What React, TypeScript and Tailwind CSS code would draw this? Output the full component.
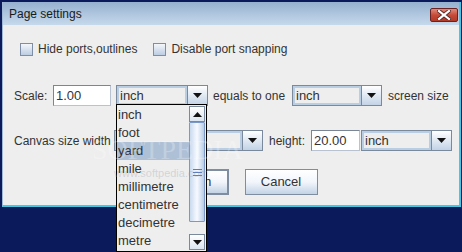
import React from 'react';

const UNITS = ['inch', 'foot', 'yard', 'mile', 'millimetre', 'centimetre', 'decimetre', 'metre'];

function Arrow({ up = false }: { up?: boolean }) {
  return (
    <svg width="9" height="5" viewBox="0 0 9 5" className={up ? 'rotate-180' : ''}>
      <path d="M0 0 H9 L4.5 5 Z" fill="#111" />
    </svg>
  );
}

function CheckBox({ label }: { label: string }) {
  return (
    <label className="flex items-center gap-[5px]">
      <span className="w-[13px] h-[13px] border border-[#7d8ea6] bg-gradient-to-b from-[#f4f7fb] to-[#bccde2]" />
      <span>{label}</span>
    </label>
  );
}

function TextField({ value, w }: { value: string; w: string }) {
  return (
    <div className={`${w} h-[21px] bg-white border border-[#7a8596] border-r-[#b8c2d0] border-b-[#b8c2d0] flex items-center pl-[2px] text-[13px]`}>
      {value}
    </div>
  );
}

function Combo({ value, w }: { value: string; w: string }) {
  return (
    <div className={`${w} h-[21px] flex border border-[#7a8a9c]`}>
      <div className="flex-1 border-2 border-[#b9cde3] bg-[#eeeeee] flex items-center pl-[1px] text-[13px]">{value}</div>
      <div className="w-[20px] border-l border-[#7a8a9c] bg-gradient-to-b from-[#ffffff] to-[#c2d3e6] flex items-center justify-center">
        <Arrow />
      </div>
    </div>
  );
}

function Button({ label, w, focused = false }: { label: string; w: string; focused?: boolean }) {
  return (
    <div className={`${w} h-[26px] flex items-center justify-center text-[13px] bg-gradient-to-b from-[#ffffff] via-[#f2f6fb] to-[#c3d3e6] ${focused ? 'border-2 border-[#7e8ea0]' : 'border border-[#7e8ea0]'}`}>
      {label}
    </div>
  );
}

export default function App() {
  return (
    <div className="w-[462px] h-[252px] bg-[#0b1a5a] relative overflow-hidden text-[12px] text-[#333]" style={{ fontFamily: '"Liberation Sans", Arial, sans-serif' }}>
      {/* window */}
      <div className="ml-[2px] mt-[2px] w-[459px] h-[205px] flex flex-col border-l border-[#9fb8d6] border-r-2 border-r-[#46c6e6] border-b-2 border-b-[#46c6e6]">
        <div className="h-[23px] bg-gradient-to-b from-[#95b1cf] to-[#c6d9ec] flex items-center pl-[6px] pr-[1px]">
          <span className="text-[12px] text-[#1a1a1a]">Page settings</span>
          <div className="ml-auto mt-[3px] w-[28px] h-[14px] rounded-[2px] border border-[#6b2222] bg-gradient-to-b from-[#e08a7a] via-[#c84a38] to-[#b03a28] flex items-center justify-center">
            <svg width="14" height="10" viewBox="0 0 14 10">
              <path d="M2 1 L12 9 M12 1 L2 9" stroke="#5a2a2a" strokeWidth="4" strokeLinecap="square" />
              <path d="M2 1 L12 9 M12 1 L2 9" stroke="#ffffff" strokeWidth="2.2" strokeLinecap="square" />
            </svg>
          </div>
        </div>

        <div className="flex-1 bg-[#eeeeee] flex flex-col">
          <div className="mt-[15px] ml-[17px] flex items-center gap-[16px]">
            <CheckBox label="Hide ports,outlines" />
            <CheckBox label="Disable port snapping" />
          </div>

          <div className="mt-[27px] ml-[11px] flex items-center">
            <span className="w-[39px]">Scale:</span>
            <TextField value="1.00" w="w-[58px]" />
            <div className="w-[5px]" />
            <Combo value="inch" w="w-[92px]" />
            <span className="ml-[5px] w-[79px]">equals to one</span>
            <Combo value="inch" w="w-[90px]" />
            <span className="ml-[6px]">screen size</span>
          </div>

          <div className="mt-[24px] ml-[11px] flex items-center">
            <span className="w-[100px]">Canvas size width</span>
            <Combo value="" w="w-[149px]" />
            <span className="ml-[6px] w-[42px]">height:</span>
            <TextField value="20.00" w="w-[49px]" />
            <div className="w-[1px]" />
            <Combo value="inch" w="w-[91px]" />
          </div>

          <div className="mt-[18px] flex items-center justify-center gap-[16px] pl-[4px]">
            <Button label="Confirm" w="w-[80px]" focused />
            <Button label="Cancel" w="w-[73px]" />
          </div>
        </div>
      </div>

      {/* dropdown popup */}
      <div className="absolute left-[116px] top-[104px] w-[91px] h-[148px] bg-[#eeeeee] border border-black flex text-[13px] text-[#333]">
        <div className="flex-1 flex flex-col pt-[1px]">
          {UNITS.map((u) => (
            <div key={u} className={`h-[18px] flex items-center pl-[1px] ${u === 'yard' ? 'bg-[#adc0d6]' : ''}`}>
              {u}
            </div>
          ))}
        </div>
        <div className="w-[17px] flex flex-col py-[1px] pr-[1px]">
          <div className="h-[16px] border border-[#7a8a9c] bg-gradient-to-b from-white to-[#dbe5f0] flex items-center justify-center">
            <Arrow up />
          </div>
          <div className="h-[100px] border border-[#7c98c6] rounded-[1px] bg-gradient-to-r from-[#c9daee] via-[#f7faff] to-[#b9cde6] flex items-center justify-center">
            <div className="flex flex-col gap-[2px]">
              <div className="w-[9px] h-[1px] bg-[#5b7cc0]" />
              <div className="w-[9px] h-[1px] bg-[#5b7cc0]" />
              <div className="w-[9px] h-[1px] bg-[#5b7cc0]" />
            </div>
          </div>
          <div className="flex-1 bg-[#eeeeee]" />
          <div className="h-[16px] border border-[#7a8a9c] bg-gradient-to-b from-white to-[#dbe5f0] flex items-center justify-center">
            <Arrow />
          </div>
        </div>
      </div>

      {/* faint screenshot watermark */}
      <div className="absolute left-[92px] top-[136px] text-[28px] leading-none text-white/25 pointer-events-none" style={{ fontFamily: '"Liberation Serif", serif' }}>
        SOFTPEDIA
      </div>
      <div className="absolute left-[114px] top-[168px] text-[11px] leading-none text-[#8a93a3]/30 pointer-events-none">www.softpedia.com</div>
    </div>
  );
}
